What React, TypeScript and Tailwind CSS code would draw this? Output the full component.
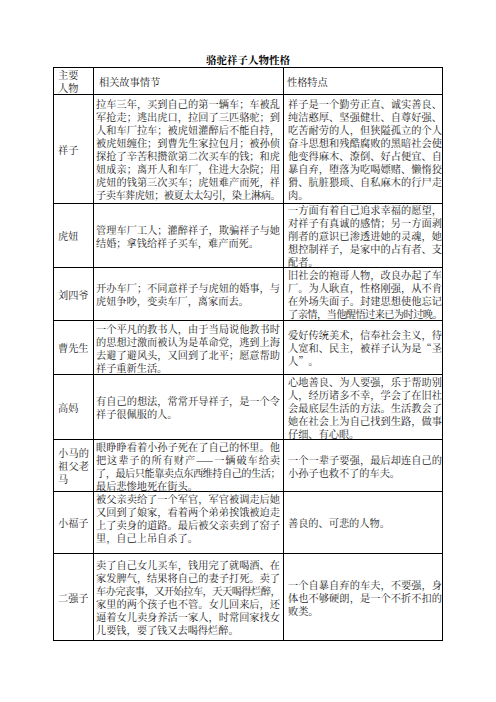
import React from "react";

type Line = { t: string; j?: boolean; k?: boolean };
const J = (t: string): Line => ({ t, j: true });
const K = (t: string): Line => ({ t, j: true, k: true });
const E = (t: string): Line => ({ t });

type Row = {
  h: string;
  name: Line[];
  c2: Line[];
  c3: Line[];
  c2top?: boolean;
};

const rows: Row[] = [
  {
    h: "h-[109px]",
    name: [E("祥子")],
    c2: [
      J("拉车三年，买到自己的第一辆车；车被乱"),
      J("军抢走；逃出虎口，拉回了三匹骆驼；到"),
      J("人和车厂拉车；被虎妞灌醉后不能自持，"),
      J("被虎妞缠住；到曹先生家拉包月；被孙侦"),
      J("探抢了辛苦积攒欲第二次买车的钱；和虎"),
      J("妞成亲；离开人和车厂，住进大杂院；用"),
      J("虎妞的钱第三次买车；虎妞难产而死，祥"),
      K("子卖车葬虎妞；被夏太太勾引，染上淋病。"),
    ],
    c3: [
      J("祥子是一个勤劳正直、诚实善良、"),
      J("纯洁憨厚、坚强健壮、自尊好强、"),
      J("吃苦耐劳的人，但狭隘孤立的个人"),
      J("奋斗思想和残酷腐败的黑暗社会使"),
      J("他变得麻木、潦倒、好占便宜、自"),
      J("暴自弃，堕落为吃喝嫖赌、懒惰狡"),
      J("猾、肮脏猥琐、自私麻木的行尸走"),
      E("肉。"),
    ],
  },
  {
    h: "h-[64px]",
    name: [E("虎妞")],
    c2: [J("管理车厂工人；灌醉祥子，欺骗祥子与她"), E("结婚；拿钱给祥子买车，难产而死。")],
    c3: [
      J("一方面有着自己追求幸福的愿望，"),
      J("对祥子有真诚的感情；另一方面剥"),
      J("削者的意识已渗透进她的灵魂，她"),
      J("想控制祥子，是家中的占有者、支"),
      E("配者。"),
    ],
  },
  {
    h: "h-[53px]",
    name: [E("刘四爷")],
    c2: [J("开办车厂；不同意祥子与虎妞的婚事，与"), E("虎妞争吵，变卖车厂，离家而去。")],
    c3: [
      J("旧社会的袍哥人物，改良办起了车"),
      J("厂。为人耿直，性格刚强，从不肯"),
      J("在外场失面子。封建思想使他忘记"),
      K("了亲情，当他醒悟过来已为时过晚。"),
    ],
  },
  {
    h: "h-[54px]",
    name: [E("曹先生")],
    c2: [
      J("一个平凡的教书人，由于当局说他教书时"),
      J("的思想过激而被认为是革命党，逃到上海"),
      J("去避了避风头，又回到了北平；愿意帮助"),
      E("祥子重新生活。"),
    ],
    c3: [
      J("爱好传统美术，信奉社会主义，待"),
      J("人宽和、民主，被祥子认为是“圣"),
      E("人”。"),
    ],
  },
  {
    h: "h-[65px]",
    name: [E("高妈")],
    c2: [J("有自己的想法，常常开导祥子，是一个令"), E("祥子很佩服的人。")],
    c3: [
      J("心地善良、为人要强，乐于帮助别"),
      J("人，经历诸多不幸，学会了在旧社"),
      J("会最底层生活的方法。生活教会了"),
      J("她在社会上为自己找到生路，做事"),
      E("仔细、有心眼。"),
    ],
  },
  {
    h: "h-[52px]",
    name: [J("小马的"), J("祖父老"), E("马")],
    c2: [
      J("眼睁睁看着小孙子死在了自己的怀里。他"),
      J("把这辈子的所有财产——一辆破车给卖"),
      K("了，最后只能靠卖点东西维持自己的生活；"),
      E("最后悲惨地死在街头。"),
    ],
    c3: [J("一个一辈子要强，最后却连自己的"), E("小孙子也救不了的车夫。")],
  },
  {
    h: "h-[62px]",
    name: [E("小福子")],
    c2top: true,
    c2: [
      J("被父亲卖给了一个军官，军官被调走后她"),
      J("又回到了娘家，看着两个弟弟挨饿被迫走"),
      J("上了卖身的道路。最后被父亲卖到了窑子"),
      E("里，自己上吊自杀了。"),
    ],
    c3: [E("善良的、可悲的人物。")],
  },
  {
    h: "h-[87px]",
    name: [E("二强子")],
    c2: [
      J("卖了自己女儿买车，钱用完了就喝酒、在"),
      J("家发脾气，结果将自己的妻子打死。卖了"),
      K("车办完丧事，又开始拉车，天天喝得烂醉，"),
      J("家里的两个孩子也不管。女儿回来后，还"),
      J("逼着女儿卖身养活一家人，时常回家找女"),
      E("儿要钱，要了钱又去喝得烂醉。"),
    ],
    c3: [
      J("一个自暴自弃的车夫，不要强，身"),
      J("体也不够硬朗，是一个不折不扣的"),
      E("败类。"),
    ],
  },
];

function Lines({ lines }: { lines: Line[] }) {
  return (
    <div className="w-full">
      {lines.map((l, i) => (
        <div
          key={i}
          className={`whitespace-nowrap ${l.j ? "text-justify [text-align-last:justify]" : ""} ${
            l.k ? "tracking-[-0.6px]" : ""
          }`}
        >
          {l.t}
        </div>
      ))}
    </div>
  );
}

export default function App() {
  return (
    <div className="w-[496px] h-[702px] bg-white pt-[53px] text-[#1c1c1c] font-['Noto_Serif_CJK_SC','Noto_Sans_CJK_SC',sans-serif] text-[10.2px] leading-[13px]">
      <div className="ml-[53px] w-[390px]">
        <div className="h-[14px] leading-[14px] text-center font-bold text-[10.5px] text-black">
          骆驼祥子人物性格
        </div>
        <div className="border-l border-r border-b border-black">
          <div className="flex h-[27px] border-t border-black">
            <div className="w-[40px] shrink-0 border-r border-black pl-[4px] flex items-center">
              <Lines lines={[E("主要"), E("人物")]} />
            </div>
            <div className="w-[190px] shrink-0 border-r border-black pl-[5px] flex items-center">
              <Lines lines={[E("相关故事情节")]} />
            </div>
            <div className="flex-1 pl-[3px] flex items-center">
              <Lines lines={[E("性格特点")]} />
            </div>
          </div>
          {rows.map((r, i) => (
            <div key={i} className={`flex border-t border-black ${r.h}`}>
              <div className="w-[40px] shrink-0 border-r border-black pl-[4px] pr-[4px] flex items-center">
                <Lines lines={r.name} />
              </div>
              <div
                className={`w-[190px] shrink-0 border-r border-black pl-[2px] pr-[3px] flex ${
                  r.c2top ? "items-start" : "items-center"
                }`}
              >
                <Lines lines={r.c2} />
              </div>
              <div className="flex-1 pl-[4px] pr-[0px] flex items-center">
                <Lines lines={r.c3} />
              </div>
            </div>
          ))}
        </div>
      </div>
    </div>
  );
}
